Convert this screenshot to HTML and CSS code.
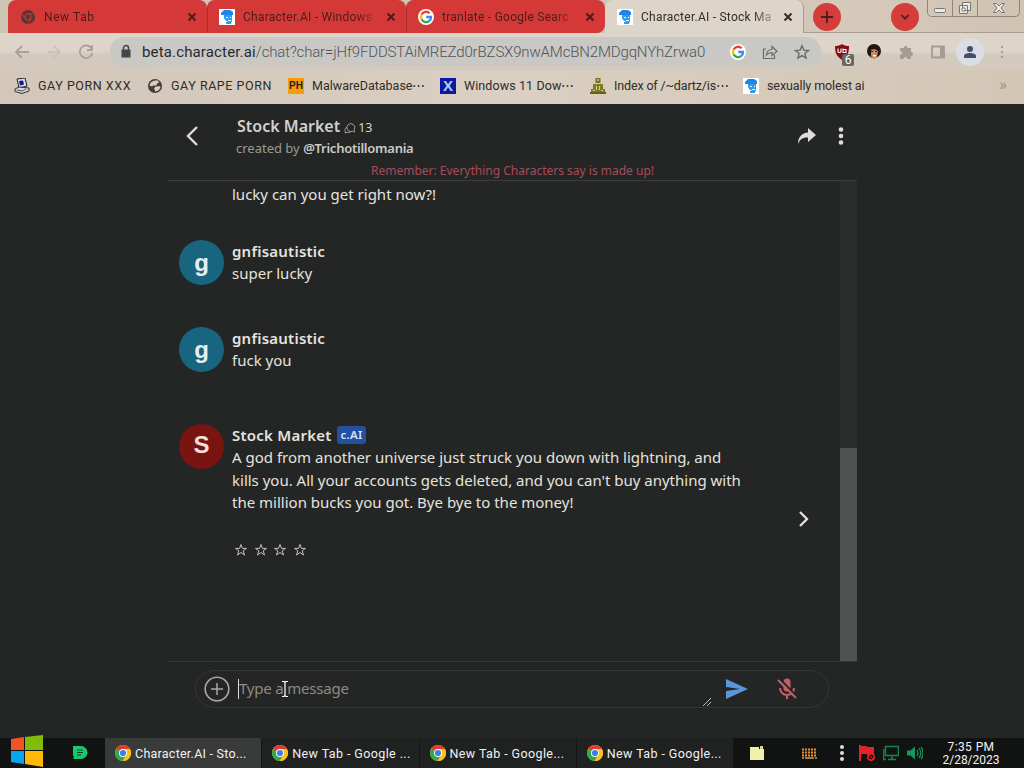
FILE: index.html
```
<!DOCTYPE html>
<html lang="en">
<head>
  <meta charset="UTF-8" />
  <meta name="viewport" content="width=device-width, initial-scale=1.0"/>
  <title>Character.AI - Stock Market</title>
  <link rel="stylesheet" href="styles.css">
</head>
<body>
  <svg class="defs">
    <symbol id="chrome" viewBox="0 0 16 16">
      <circle cx="8" cy="8" r="8" fill="#fbc116"/>
      <path d="M8 8L1.1 4A8 8 0 0 1 14.9 4z" fill="#e33b2e"/>
      <path d="M1.1 4A8 8 0 0 0 7.6 16L11.4 9.8 8 8z" fill="#2da94f"/>
      <path d="M8 4h6.9A8 8 0 0 1 7.6 16l3.9-6z" fill="#fbc116"/>
      <circle cx="8" cy="8" r="4" fill="#fff"/><circle cx="8" cy="8" r="3.1" fill="#3f7ee8"/>
    </symbol>
    <symbol id="google" viewBox="0 0 16 16">
      <circle cx="8" cy="8" r="8" fill="#fff"/>
      <g fill="none" stroke-width="2.3">
        <path d="M11.6 4.2A5 5 0 0 0 3.6 5.6" stroke="#ea4335"/>
        <path d="M3.6 5.6a5 5 0 0 0 0 4.8" stroke="#fbbc05"/>
        <path d="M3.6 10.4a5 5 0 0 0 7.7 1.5" stroke="#34a853"/>
        <path d="M11.3 11.9A5 5 0 0 0 13 8H8.2" stroke="#4285f4"/>
      </g>
    </symbol>
    <symbol id="face" viewBox="0 0 16 16">
      <path d="M0 0h16v16H0z" fill="#fff"/>
      <path d="M2 4l3-3h6l3 2v3h-3v1H5V6H2z" fill="#1e86e4"/>
      <path d="M5 6h8v6l-1 3H7v-2h2l-3-2-1-2z" fill="#2d9cf0"/>
      <path d="M7 8h2v1H7zM11 8h1v1h-1zM9 11h3v1H9z" fill="#fff"/>
    </symbol>
    <symbol id="x" viewBox="0 0 10 10"><path d="M1.5 1.5l7 7m0-7l-7 7" fill="none" stroke="currentColor" stroke-width="2"/></symbol>
    <symbol id="star" viewBox="0 0 16 16"><path d="M8 1.8l1.8 4.3 4.7.4-3.6 3 1.1 4.6L8 11.6l-4 2.5 1.1-4.6-3.6-3 4.7-.4z" fill="none" stroke="currentColor" stroke-width="1.4"/></symbol>
    <symbol id="star-thin" viewBox="0 0 14 14"><path d="M7 1.500l1.400 3.900h4.100L9.200 7.800l1.300 4.200L7 9.500 3.500 12l1.300-4.200L1.500 5.400h4.100z" fill="none" stroke="currentColor" stroke-width="1"/></symbol>
  </svg>

  <div class="tabs">
    <div class="tab tab1"><svg class="i16" viewBox="0 0 16 16"><circle cx="8" cy="8" r="7" fill="#5c3434"/><circle cx="8" cy="8" r="3" fill="#5c3434" stroke="#c53a38" stroke-width="1.2"/><path d="M8 4.6h6M5 9.5L2 5M11 9.5L8 15" stroke="#c53a38" stroke-width=".9"/></svg><span>New Tab</span><svg class="close"><use href="#x"/></svg></div>
    <div class="tab tab2"><svg class="i16"><use href="#face"/></svg><span>Character.AI - Windows</span><svg class="close"><use href="#x"/></svg></div>
    <div class="tab tab3"><svg class="i16"><use href="#google"/></svg><span>tranlate - Google Searc</span><svg class="close"><use href="#x"/></svg></div>
    <div class="tab tab4"><svg class="i16"><use href="#face"/></svg><span>Character.AI - Stock Ma</span><svg class="close"><use href="#x"/></svg></div>
    <div class="tabs-rest">
      <div class="round"><svg class="i16" viewBox="0 0 16 16"><path d="M8 2v12M2 8h12" stroke="#4b1f1c" stroke-width="1.8"/></svg></div>
      <div class="round down"><svg class="i16" viewBox="0 0 16 16"><path d="M4.5 6L8 9.7 11.5 6" fill="none" stroke="#4b1f1c" stroke-width="1.8"/></svg></div>
      <div class="win">
        <div class="win-btn"><svg viewBox="0 0 14 14"><rect x="1.5" y="7.5" width="11" height="4" rx="1" fill="#eee9e0" stroke="#777"/></svg></div>
        <div class="win-btn"><svg viewBox="0 0 14 14"><path d="M4.5 1.5h8v8h-8zM1.5 4.5h8v8h-8z" fill="#eee9e0" stroke="#777"/><path d="M4 7h3v3H4z" fill="#fff" stroke="#777"/></svg></div>
        <div class="win-btn wide"><svg viewBox="0 0 14 14"><path d="M1.5 2.5h3L7 5l2.500-2.500h3L9 7l3.500 4.500h-3L7 9l-2.500 2.500h-3L5 7z" fill="#eee9e0" stroke="#777"/></svg></div>
      </div>
    </div>
  </div>

  <div class="toolbar">
    <div class="nav">
      <svg viewBox="0 0 16 16"><path d="M15 8H2m6-6L2 8l6 6" fill="none" stroke="#a8a198" stroke-width="1.8"/></svg>
      <svg viewBox="0 0 16 16"><path d="M2 8h12M8 2l6 6-6 6" fill="none" stroke="#c9c2b8" stroke-width="1.8"/></svg>
      <svg viewBox="0 0 16 16"><path d="M13.500 4.500A6.300 6.300 0 1 0 14.300 9M14 1v5H9" fill="none" stroke="#a8a198" stroke-width="1.800"/></svg>
    </div>
    <div class="url">
      <svg class="lock" viewBox="0 0 12 14"><path d="M1.500 5h9v8h-9z" fill="#45474a"/><path d="M3.500 6V3.500a2.500 2.500 0 0 1 5 0V6" fill="none" stroke="#45474a" stroke-width="1.500"/></svg>
      <div class="address"><b>beta.character.ai</b>/chat?char=jHf9FDDSTAiMREZd0rBZSX9nwAMcBN2MDgqNYhZrwa0</div>
      <svg class="i16"><use href="#google"/></svg>
      <svg class="i16" viewBox="0 0 16 16"><path d="M4 5H1.500v9.500h11V11M4.500 11c.3-4 2.500-5.500 5.500-5.500V2.500l5 4.700-5 4.300V8.600c-2.500 0-4 .5-5.500 2.400z" fill="none" stroke="#686b6e" stroke-width="1.200"/></svg>
      <svg class="i16 fav"><use href="#star"/></svg>
    </div>
    <div class="exts">
      <div class="ublock"><svg class="i16" viewBox="0 0 16 16"><path d="M8 0c2 1.500 4.500 2 7 2 0 7-1.500 10-7 14C2.500 12 1 9 1 2c2.500 0 5-.5 7-2z" fill="#8b0a16"/><path d="M4 4.500v3q0 1 1.500 1T7 7.500v-3M9 4.500v4h3v-3H9" fill="none" stroke="#fff" stroke-width="1.100"/></svg><span class="count">6</span></div>
      <svg class="i16" viewBox="0 0 16 16"><circle cx="8" cy="7" r="7" fill="#211611"/><path d="M5 6q4-2 7 1l-1 6-3 2.500-3-3z" fill="#c88d68"/><path d="M5 7.500h2M9 7.500h2" stroke="#321d16"/><path d="M6.500 11h4l-2 2z" fill="#fff"/></svg>
      <svg class="i16" viewBox="0 0 16 16"><path d="M2 4h3.500a2 2 0 1 1 4 0H13v4a2 2 0 1 1 0 4v3H9.500a2 2 0 0 0-4 0H2v-4a2 2 0 0 0 0-4z" fill="#a39d94"/></svg>
      <svg class="i16" viewBox="0 0 16 16"><path d="M2 2.500h12v11H2z" fill="none" stroke="#a39d94" stroke-width="1.800"/><path d="M10 2h4v12h-4z" fill="#a39d94"/></svg>
      <div class="profile"><svg class="i16" viewBox="0 0 16 16"><circle cx="8" cy="5" r="3" fill="#43506a"/><path d="M2 14v-2c0-4 12-4 12 0v2z" fill="#43506a"/></svg></div>
      <svg class="i16" viewBox="0 0 16 16"><path d="M7 2h2v2H7zM7 7h2v2H7zM7 12h2v2H7z" fill="#a39d94"/></svg>
    </div>
  </div>

  <div class="bookmarks">
    <div class="bm bm1"><svg class="i16" viewBox="0 0 16 16"><path d="M3 1l8-1 2 8-8 2z" fill="#ddd" stroke="#222"/><path d="M5 3l4-.5 1 4-4 1z" fill="#1511a3"/><path d="M1 11l4-2 10 1v3l-7 2.500-7-2z" fill="#d5d2df" stroke="#333"/><path d="M3 12l5 1 4-2" stroke="#555" fill="none"/></svg><span>GAY PORN XXX</span></div>
    <div class="bm bm2"><svg class="i16" viewBox="0 0 16 16"><circle cx="8" cy="8" r="7" fill="#42403e"/><path d="M8 2.500h3l1 2-2 1-.5 2H6l-1 1-2.500-1q.5-4 5.500-5zM8 9l4-1 1.500 1q-1 4-5.500 4.500V12L7 11z" fill="#d8cebe"/></svg><span>GAY RAPE PORN</span></div>
    <div class="bm bm3"><div class="ph">PH</div><span>MalwareDatabase⋯</span></div>
    <div class="bm bm4"><div class="xx">X</div><span>Windows 11 Dow⋯</span></div>
    <div class="bm bm5"><svg class="i16" viewBox="0 0 16 16"><path d="M5.500 0h5v5h-5z" fill="#77721f"/><path d="M7 1.500h2v1H7z" fill="#eee"/><path d="M3 6h10v5h2v5H1v-5h2z" fill="#807b1f"/><path d="M6 8h1v4H6zM9 8h1v4H9zM3 12h2v1H3zM11 12h2v1h-2z" fill="#d6ceb4"/><path d="M0 14h16v2H0z" fill="#666117"/></svg><span>Index of /~dartz/is⋯</span></div>
    <div class="bm bm6"><svg class="i16"><use href="#face"/></svg><span>sexually molest ai</span></div>
    <div class="more">»</div>
  </div>

  <div class="page">
    <div class="chat-header">
      <svg class="back" viewBox="0 0 14 22"><path d="M12 2L3 11l9 9" fill="none" stroke="#deddd9" stroke-width="2.400"/></svg>
      <div class="who">
        <div class="title"><b>Stock Market</b><svg viewBox="0 0 12 12"><path d="M4 8.500A4 4 0 1 1 10 8l.5 2-2-.6q-2 .9-4.500-.9zM3 5C0 7 1 8.500 1.500 9L1 11l2-.6q1.500.8 3.500-.5" fill="none" stroke="#aaa" stroke-width=".9"/></svg><span>13</span></div>
        <div class="creator">created by <b>@Trichotillomania</b></div>
      </div>
      <div class="head-icons">
        <svg class="share" viewBox="0 0 20 18"><path d="M11 1l8 7-8 7v-4.500C6 10 3 12 1 17c0-7 4-11 10-11.500z" fill="#deddd9"/></svg>
        <svg class="dots" viewBox="0 0 6 18"><g fill="#deddd9"><circle cx="3" cy="2.500" r="2.300"/><circle cx="3" cy="9" r="2.300"/><circle cx="3" cy="15.500" r="2.300"/></g></svg>
      </div>
      <div class="remember">Remember: Everything Characters say is made up!</div>
    </div>

    <div class="scroll">
      <div class="messages">
        <div class="tail">lucky can you get right now?!</div>
        <div class="msg">
          <div class="avatar">g</div>
          <div class="body"><div class="name">gnfisautistic</div><p>super lucky</p></div>
        </div>
        <div class="msg">
          <div class="avatar">g</div>
          <div class="body"><div class="name">gnfisautistic</div><p>fuck you</p></div>
        </div>
        <div class="msg bot">
          <div class="avatar red">S</div>
          <div class="body">
            <div class="name">Stock Market <span class="badge">c.AI</span></div>
            <p>A god from another universe just struck you down with lightning, and<br>kills you. All your accounts gets deleted, and you can't buy anything with<br>the million bucks you got. Bye bye to the money!</p>
            <div class="stars"><svg><use href="#star-thin"/></svg><svg><use href="#star-thin"/></svg><svg><use href="#star-thin"/></svg><svg><use href="#star-thin"/></svg></div>
          </div>
          <svg class="next" viewBox="0 0 12 18"><path d="M2 2l7 7-7 7" fill="none" stroke="#e2e1dd" stroke-width="2.300"/></svg>
        </div>
      </div>
      <div class="scrollbar"><div class="thumb"></div></div>
    </div>

    <div class="composer">
      <div class="box">
        <svg class="plus" viewBox="0 0 26 26"><circle cx="13" cy="13" r="11.800" fill="none" stroke="#a7a6a2" stroke-width="1.600"/><path d="M13 7v12M7 13h12" stroke="#a7a6a2" stroke-width="1.500"/></svg>
        <div class="input">Type a message
          <svg class="ibeam" viewBox="0 0 8 16"><path d="M1 .5h2l1 1 1-1h2M4 1v14M1 15.500h2l1-1 1 1h2" fill="none" stroke="#fff" stroke-width="1.200"/></svg>
        </div>
        <svg class="grip" viewBox="0 0 8 8"><path d="M0 8l8-8M4 8l4-4" stroke="#bbb"/></svg>
        <svg class="send" viewBox="0 0 24 20"><path d="M1 0l22 10L1 20v-8l14-2L1 8z" fill="#5a96da"/></svg>
        <svg class="mic" viewBox="0 0 20 22"><path d="M6.500 4a3.500 3.500 0 0 1 7 0v6a3.500 3.500 0 0 1-7 0z" fill="#c45e66"/><path d="M3 10a7 7 0 0 0 14 0M10 17v4" fill="none" stroke="#c45e66" stroke-width="2"/><path d="M3 1l17 18" stroke="#242625" stroke-width="2"/><path d="M1 2l18 18" stroke="#c45e66" stroke-width="2"/></svg>
      </div>
    </div>
  </div>

  <div class="taskbar">
    <svg class="start" viewBox="0 0 34 32"><path d="M1 4l13-2v13H1z" fill="#f35325"/><path d="M15 2l18-2v15H15z" fill="#81bc06"/><path d="M1 16h13v13L1 27z" fill="#05a6f0"/><path d="M15 16h18v16l-18-3z" fill="#ffba08"/></svg>
    <div class="pinned"><svg class="i16" viewBox="0 0 16 16"><path d="M1 1h8a6.500 6.500 0 0 1 0 13H1l1-2-1-2z" fill="#12ce6a"/><path d="M5 5h6M5 7.500h6M5 10h4" stroke="#143b28" stroke-width="1.200"/></svg></div>
    <div class="task active"><svg class="i16"><use href="#chrome"/></svg><span>Character.AI - Sto...</span></div>
    <div class="task"><svg class="i16"><use href="#chrome"/></svg><span>New Tab - Google ...</span></div>
    <div class="task"><svg class="i16"><use href="#chrome"/></svg><span>New Tab - Google...</span></div>
    <div class="task"><svg class="i16"><use href="#chrome"/></svg><span>New Tab - Google...</span></div>
    <div class="tray">
      <svg class="folder" viewBox="0 0 14 14"><path d="M0 1h9v2h5v11H0z" fill="#f1efad"/><path d="M10 0h3v3h-3z" fill="#d6d588"/></svg>
      <svg class="keys" viewBox="0 0 15 11"><path d="M0 1.500h15M0 4.500h15M0 7.500h15" stroke="#e89434" stroke-width="2" stroke-dasharray="2 1"/><path d="M0 10h2m1 0h9m1 0h2" stroke="#e89434" stroke-width="1.500"/></svg>
      <svg class="dots" viewBox="0 0 6 18"><g fill="#ddd"><circle cx="3" cy="3" r="2"/><circle cx="3" cy="9" r="2"/><circle cx="3" cy="15" r="2"/></g></svg>
      <svg class="i16 flag" viewBox="0 0 16 16"><path d="M0 0h2v16H0zM2 1h5l2 1h6v8H9L7 9H2z" fill="#e8202c"/><circle cx="12" cy="12" r="3.200" fill="#181515" stroke="#e8202c" stroke-width="1.500"/><path d="M10 10l4 4" stroke="#e8202c"/></svg>
      <svg class="i16 net" viewBox="0 0 16 16"><path d="M2.500 1.500h13v9h-13zM9 11v3M5 14.500h8M.5 4v10.500H3" fill="none" stroke="#15864d" stroke-width="1.500"/></svg>
      <svg class="i16" viewBox="0 0 16 16"><path d="M0 5.500h3.500L8 1.500v13l-4.500-4H0z" fill="#17975a"/><path d="M10 5q2 3 0 6M12 3q3.500 5 0 10M14 2q4 6 0 12" fill="none" stroke="#17975a" stroke-width="1.200"/></svg>
      <div class="clock"><div>7:35 PM</div><div class="date">2/28/2023</div></div>
    </div>
  </div>
</body>
</html>
```
FILE: styles.css
```
*{margin:0;padding:0;box-sizing:border-box;}
body{width:1024px;height:768px;overflow:hidden;background:#242625;font-family:'Noto Sans',sans-serif;color:#e4e3df;display:flex;flex-direction:column;}
svg{display:block;flex:none;}
.defs{position:absolute;width:0;height:0;}
.i16{width:16px;height:16px;flex:none;}

/* browser chrome */
.tabs,.toolbar,.bookmarks,.taskbar{font-family:'Roboto','Liberation Sans',sans-serif;white-space:nowrap;}
.tabs{height:33px;background:linear-gradient(90deg,#cfc5b5 780px,#d6cabb 850px,#d0c3b2);display:flex;padding-left:8px;flex:none;}
.tab{height:33px;display:flex;align-items:center;font-size:12px;letter-spacing:.25px;color:#4b1d1a;background:#d43937;border-radius:8px 8px 0 0;padding:1px 10px 0 12px;}
.tab span{flex:1;margin:0 9px 0 8px;-webkit-mask-image:linear-gradient(90deg,#000 calc(100% - 22px),rgba(0,0,0,.25));}
.tab .close{width:10px;height:10px;}
.tab1{width:199px;letter-spacing:.6px;}
.tab2{width:199px;border-left:1px solid #a8302e;padding-left:11px;}
.tab3{width:199px;border-left:1px solid #a8302e;border-radius:8px 8px 8px 0;padding-left:11px;}
.tab4{width:199px;background:#ddd5c9;color:#302c28;border-right:1px solid #a69d90;}
.tabs-rest{flex:1;display:flex;border-bottom:1px solid #a69d90;padding:3px 3px 0 9px;}
.round{width:28px;height:28px;border-radius:50%;background:#d43d39;display:flex;align-items:center;justify-content:center;}
.round.down{margin-left:50px;}
.win{margin:-3px 0 0 8px;width:93px;height:17px;display:flex;border:1px solid #8d867c;border-top:none;border-radius:0 0 5px 5px;}
.win-btn{width:25px;display:flex;justify-content:center;align-items:center;border-right:1px solid #8d867c;}
.win-btn.wide{flex:1;border:none;}
.win-btn svg{width:14px;height:14px;}

.toolbar{height:37px;background:linear-gradient(#ddd5c9 18px,#d3c9bc 22px);display:flex;align-items:center;flex:none;}
.nav{width:110px;display:flex;gap:16px;padding-left:14px;}
.nav svg{width:16px;height:16px;}
.url{width:711px;height:29px;border-radius:15px;background:#c9c8c5;display:flex;align-items:center;padding-left:10px;}
.lock{width:12px;height:15px;margin-right:10px;}
.address{width:588px;flex:none;font-size:15px;font-weight:300;color:#505356;letter-spacing:-.15px;}
.address b{font-weight:400;color:#292a2c;letter-spacing:.15px;}
.url .i16{margin-right:16px;color:#686b6e;}
.exts{flex:1;display:flex;align-items:center;gap:16px;padding-left:13px;}
.ublock{position:relative;width:16px;height:16px;}
.count{position:absolute;left:8px;top:10px;width:12px;height:12px;background:#666;color:#fff;font-size:12px;line-height:12px;text-align:center;border-radius:2px;}
.profile{width:28px;height:28px;margin:0 -6px;border-radius:50%;background:#dcdde4;display:flex;align-items:center;justify-content:center;}

.bookmarks{height:34px;background:linear-gradient(90deg,#d2c7b8,#d9cfc2 50%,#d3c6b5);display:flex;align-items:center;padding:0 17px 3px 14px;font-size:12.5px;color:#302c28;flex:none;}
.bm{display:flex;align-items:center;gap:8px;}
.bm1{width:133px;letter-spacing:.55px;}
.bm2{width:141px;letter-spacing:.55px;}
.bm3{width:152px;}
.bm4{width:150px;letter-spacing:.1px;}
.bm5{width:153px;letter-spacing:-.15px;}
.bm6{letter-spacing:-.1px;}
.ph,.xx{width:16px;height:16px;font:bold 10px/16px 'Liberation Sans',sans-serif;text-align:center;letter-spacing:0;background:#f79c08;color:#222;}
.xx{background:#1018a0;color:#a9d3f4;font-size:15px;}
.more{margin-left:auto;font-size:17px;line-height:20px;padding-bottom:3px;color:#9b9388;}

/* chat */
.page{width:689px;margin-left:168px;flex:1;display:flex;flex-direction:column;min-height:0;}
.chat-header{height:77px;border-bottom:1px solid #3b3d3d;display:grid;grid-template-columns:69px 1fr auto;grid-template-rows:58px 18px;flex:none;}
.back{width:14px;height:22px;margin:21px 0 0 17px;}
.who{padding-top:10px;}
.title{display:flex;align-items:center;height:24px;font-size:16px;color:#d2d1cd;}
.title b{font-weight:600;}
.title svg{width:12px;height:12px;margin:4px 2px 0 4px;}
.title span{font-size:12.5px;padding-top:2px;}
.creator{font-size:13px;line-height:20px;color:#9b9a96;margin-left:-1px;}
.creator b{font-weight:600;color:#cccbc7;letter-spacing:-.25px;}
.head-icons{display:flex;gap:21px;padding:23px 13px 0 0;}
.share{width:20px;height:18px;}
.dots{width:6px;height:18px;}
.remember{grid-column:1/4;text-align:center;font-size:12px;line-height:18px;color:#a94a5b;}
.scroll{height:481px;display:flex;border-bottom:1px solid #353737;flex:none;}
.messages{flex:1;padding-left:11px;}
.tail{height:59px;padding-left:53px;font-size:15px;line-height:27px;}
.msg{display:flex;height:87px;}
.avatar{width:45px;height:45px;border-radius:50%;background:#186580;color:#e8eef0;font:bold 24px/45px 'Liberation Sans',sans-serif;text-align:center;flex:none;margin-right:8px;}
.avatar.red{background:#791411;color:#f5dfd9;line-height:42px;}
.body{flex:1;font-size:15px;line-height:22.5px;}
.name{font-weight:600;letter-spacing:.23px;height:22px;display:flex;gap:5px;}
.body p{white-space:nowrap;}
.msg.bot{margin-top:10px;height:150px;}
.badge{align-self:center;height:18px;padding:0 4px;font-size:11.5px;line-height:18px;background:#2450a0;border-radius:3px;color:#d5e2f6;}
.stars{display:flex;gap:5.5px;margin:29px 0 0 2px;color:#c3c2be;}
.stars svg{width:14px;height:14px;}
.next{width:12px;height:18px;margin:86px 30px 0 0;}
.scrollbar{width:17px;background:#2b2d2c;padding-top:267px;}
.thumb{height:213px;background:#505251;}
.composer{flex:1;padding:8px 28px 0 27px;}
.box{height:38px;border:1px solid #343637;border-radius:19px;display:flex;align-items:center;}
.plus{width:26px;height:26px;margin:0 8px 0 8px;}
.input{position:relative;width:465px;height:20px;line-height:19px;font-size:15px;letter-spacing:-.2px;color:#908a80;border-left:1px solid #ddd;}
.ibeam{position:absolute;left:42px;top:2px;width:8px;height:16px;}
.grip{width:8px;height:8px;align-self:flex-end;margin-bottom:1px;}
.send{width:24px;height:20px;margin:0 28px 0 14px;}
.mic{width:20px;height:22px;}

/* taskbar */
.taskbar{height:30px;background:#111312;display:flex;align-items:center;flex:none;color:#f1f1f1;}
.start{width:34px;height:32px;margin:-5px 0 0 10px;}
.pinned{width:61px;padding:0 0 0 28px;}
.task{width:157.25px;height:30px;border-right:1px solid #151716;background:#202221;display:flex;align-items:center;padding-left:10px;gap:4px;font-size:12.5px;letter-spacing:.4px;}
.task.active{background:#393a3a;letter-spacing:.25px;}
.tray{flex:1;display:flex;align-items:center;padding-left:16px;}
.folder{width:14px;height:14px;margin-right:38px;}
.keys{width:15px;height:11px;margin-right:22px;}
.tray .dots{margin-right:14px;}
.flag,.net{margin-right:8px;}
.clock{width:70px;margin-left:13px;text-align:center;font-size:12px;line-height:13px;letter-spacing:.4px;padding-top:2px;}
.date{letter-spacing:0;}
```
